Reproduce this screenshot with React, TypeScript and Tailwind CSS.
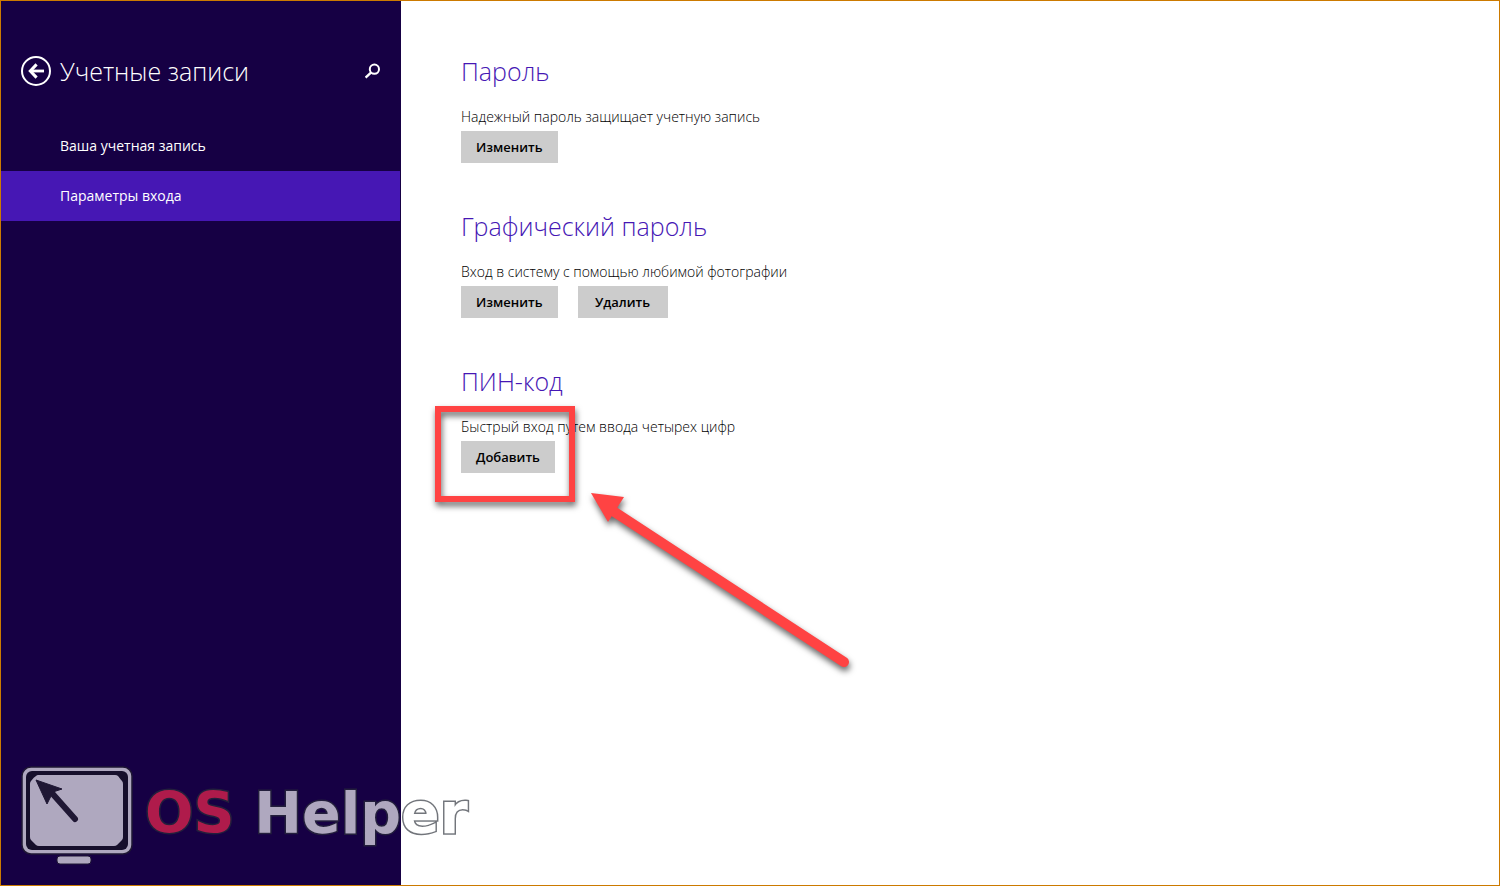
import { useState } from "react";

interface Section {
  id: string;
  title: string;
  description: string;
  actions: string[];
  highlighted?: boolean;
}

const NAV_ITEMS = ["Ваша учетная запись", "Параметры входа"];

const SECTIONS: Section[] = [
  {
    id: "password",
    title: "Пароль",
    description: "Надежный пароль защищает учетную запись",
    actions: ["Изменить"],
  },
  {
    id: "picture",
    title: "Графический пароль",
    description: "Вход в систему с помощью любимой фотографии",
    actions: ["Изменить", "Удалить"],
  },
  {
    id: "pin",
    title: "ПИН-код",
    description: "Быстрый вход путем ввода четырех цифр",
    actions: ["Добавить"],
    highlighted: true,
  },
];

function BackIcon() {
  return (
    <svg viewBox="0 0 30 30" className="h-[30px] w-[30px]" fill="none" stroke="currentColor" aria-hidden="true">
      <circle cx="15" cy="15" r="14" strokeWidth="2" />
      <path d="M9.5 15H23" strokeWidth="2.8" />
      <path d="M15.6 8.4L9.3 15l6.3 6.6" strokeWidth="3" />
    </svg>
  );
}

function SearchIcon() {
  return (
    <svg viewBox="0 0 16 16" className="h-4 w-4" fill="none" stroke="currentColor" aria-hidden="true">
      <circle cx="9.4" cy="6.2" r="4.6" strokeWidth="2" />
      <path d="M6.2 9.4L0.6 14.6" strokeWidth="2.4" />
    </svg>
  );
}

/** Red frame and arrow drawn over the section they point at. */
function Callout() {
  return (
    <svg
      viewBox="0 0 430 280"
      className="pointer-events-none absolute top-10 -left-8 h-[280px] w-[430px] drop-shadow-[1px_4px_3px_rgba(0,0,0,0.6)]"
      aria-hidden="true"
    >
      <rect x="9" y="8" width="134" height="90" fill="none" stroke="#ff4343" strokeWidth="6" />
      <path d="M184 110L415 261" stroke="#ff4343" strokeWidth="10" strokeLinecap="round" />
      <path d="M162 92L195 96L179 121Z" fill="#ff4343" />
    </svg>
  );
}

function MonitorLogo() {
  return (
    <svg viewBox="0 0 112 100" className="h-[100px] w-28" aria-hidden="true">
      <rect x="1" y="2" width="110" height="87" rx="9" fill="#fff" stroke="#24242c" strokeWidth="1.5" />
      <rect x="5" y="6" width="102" height="79" rx="6" fill="#17171f" />
      <path
        d="M17 10H94Q96 10 97 11Q100 15 101 16Q102 17 102 19V72Q102 74 101 75L96 80Q95 81 93 81H18Q16 81 15 80L10 75Q9 74 9 72V19Q9 17 10 16Q13 12 15 11Q16 10 17 10Z"
        fill="#fff"
      />
      <path d="M30 27L54 54" stroke="#24242c" strokeWidth="6" strokeLinecap="round" />
      <path d="M15 15L41 24L32 27L26 39Z" fill="#24242c" stroke="#24242c" />
      <rect x="36" y="91" width="34" height="8" rx="3" fill="#fff" stroke="#24242c" />
    </svg>
  );
}

function Watermark() {
  return (
    <div className="pointer-events-none absolute bottom-5 left-5 flex items-start gap-3 opacity-[0.66]">
      <MonitorLogo />
      <p className="pt-3 font-['DejaVu_Sans',sans-serif] text-[57px] leading-[72px] font-bold whitespace-pre text-white [-webkit-text-stroke:3px_#2a2f38] [paint-order:stroke_fill]">
        <span className="text-[#ff2a50]">OS</span> Helper
      </p>
    </div>
  );
}

export default function App() {
  const [active, setActive] = useState(1);

  return (
    <div className="relative flex min-h-screen border border-[#cc7a00] bg-white font-['Open_Sans',sans-serif] text-sm text-black">
      <aside className="w-[400px] shrink-0 bg-[#160044] text-white">
        <header className="flex items-center pt-[50px] pr-5 pl-5">
          <button type="button" aria-label="Назад">
            <BackIcon />
          </button>
          <h1 className="ml-[9px] flex-1 text-[25px] leading-10 font-light">Учетные записи</h1>
          <button type="button" aria-label="Поиск">
            <SearchIcon />
          </button>
        </header>
        <nav className="mt-[30px] pr-px">
          {NAV_ITEMS.map((item, i) => (
            <a
              key={item}
              href="#"
              aria-current={i === active ? "page" : undefined}
              onClick={(e) => {
                e.preventDefault();
                setActive(i);
              }}
              className={
                i === active
                  ? "flex h-[50px] items-center bg-[#4617b4] pl-[59px]"
                  : "flex h-[50px] items-center pl-[59px]"
              }
            >
              {item}
            </a>
          ))}
        </nav>
      </aside>

      <main className="flex flex-1 flex-col gap-[43px] pt-[50px] pl-[60px]">
        {SECTIONS.map((s) => (
          <section key={s.id} className="relative">
            <h2 className="text-[25px] leading-10 font-light text-[#4617b4]">{s.title}</h2>
            <p className="mt-4 leading-5 font-light">{s.description}</p>
            <div className="mt-1 flex gap-5">
              {s.actions.map((action) => (
                <button
                  key={action}
                  type="button"
                  className="h-8 min-w-[90px] bg-[#cccccc] px-[15px] text-[13px] font-semibold"
                >
                  {action}
                </button>
              ))}
            </div>
            {s.highlighted && <Callout />}
          </section>
        ))}
      </main>

      <Watermark />
    </div>
  );
}
